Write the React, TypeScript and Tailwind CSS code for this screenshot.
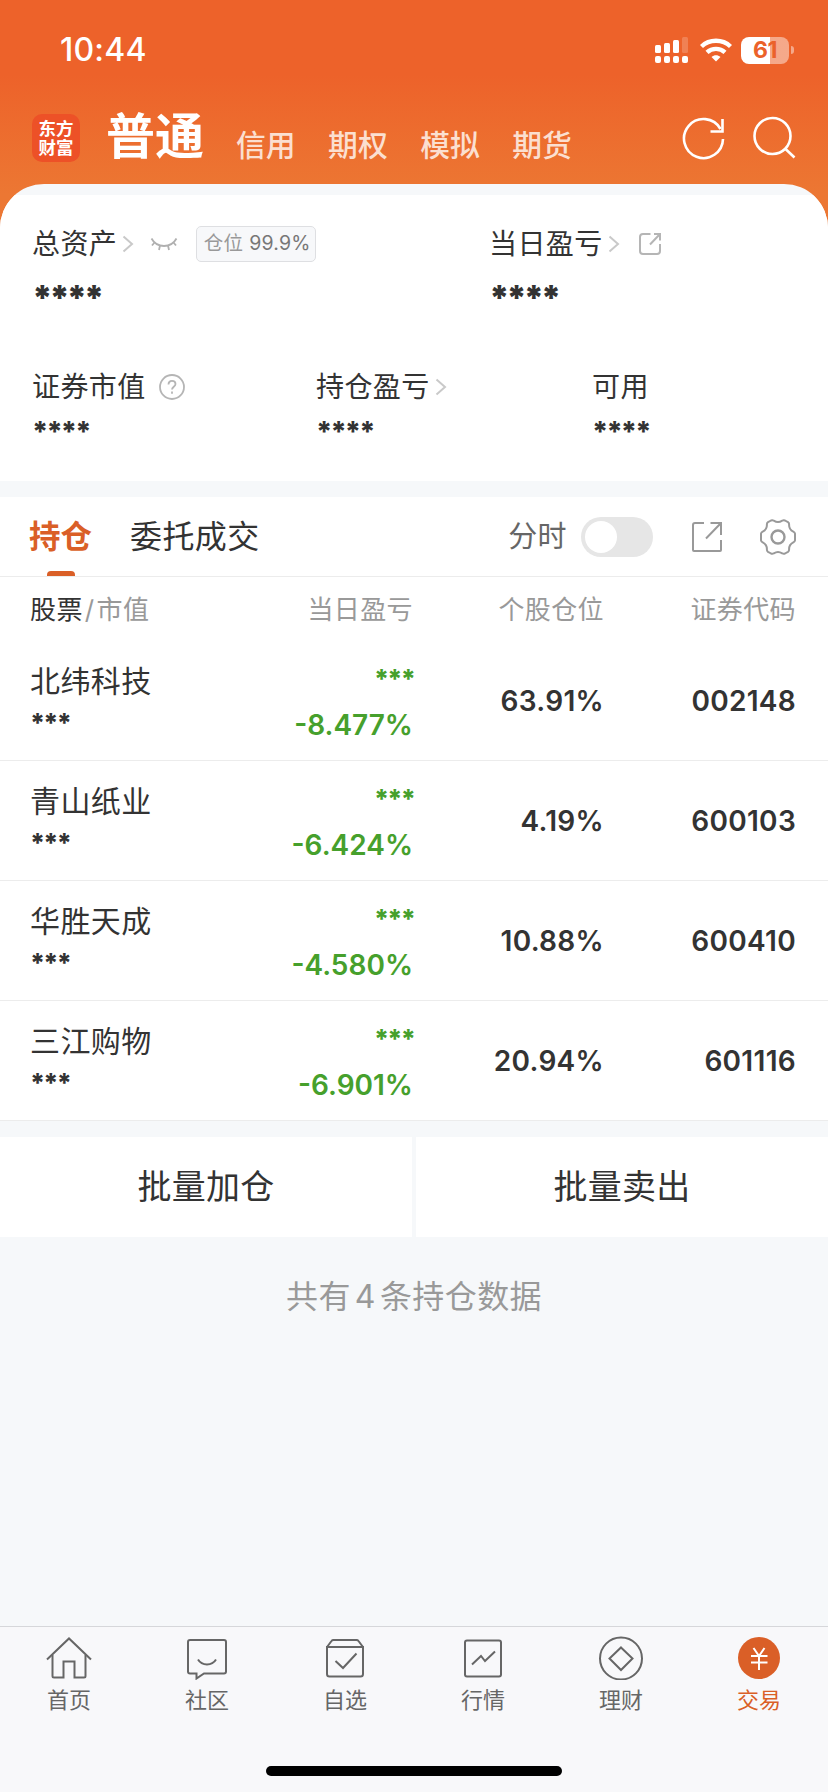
import type { ReactNode } from "react";
import clsx from "clsx";

interface Holding {
  name: string;
  change: string;
  position: string;
  code: string;
}

interface NavItem {
  label: string;
  icon: ReactNode;
  active?: boolean;
}

const MARKETS: string[] = ["信用", "期权", "模拟", "期货"];

const HOLDINGS: Holding[] = [
  { name: "北纬科技", change: "-8.477%", position: "63.91%", code: "002148" },
  { name: "青山纸业", change: "-6.424%", position: "4.19%", code: "600103" },
  { name: "华胜天成", change: "-4.580%", position: "10.88%", code: "600410" },
  { name: "三江购物", change: "-6.901%", position: "20.94%", code: "601116" },
];

const NAV_ITEMS: NavItem[] = [
  {
    label: "首页",
    icon: (
      <>
        <path d="M1 23.5 23 2.5l22 21" />
        <path d="M6.5 19v21q0 1.5 1.5 1.5h9.500V25.500h11v16H38q1.500 0 1.500-1.500V19" />
      </>
    ),
  },
  {
    label: "社区",
    icon: (
      <>
        <path d="M12.500 37.500H6q-2 0-2-2V6q0-2 2-2h34q2 0 2 2v29.500q0 2-2 2H20L12.500 42.500z" />
        <path d="M14 23.500c4 6.500 14 6.500 18 0" />
      </>
    ),
  },
  {
    label: "自选",
    icon: (
      <>
        <path d="M5 11h36v27q0 2.500-2.500 2.500h-31Q5 40.500 5 38z" />
        <path d="M5 11 9.500 5q.7-1 2-1h23q1.300 0 2 1L41 11" />
        <path d="m13.500 25 7.500 7 13.500-14.500" />
      </>
    ),
  },
  {
    label: "行情",
    icon: (
      <>
        <rect x="5" y="4.500" width="36" height="36" rx="2" />
        <path d="m12 28.500 9-8.500 4 5 10-9.500" />
      </>
    ),
  },
  {
    label: "理财",
    icon: (
      <>
        <circle cx="23" cy="22.500" r="21" />
        <path d="M23 11.500 34.500 22.500 23 34 11.500 22.500z" />
      </>
    ),
  },
  {
    label: "交易",
    active: true,
    icon: (
      <>
        <circle cx="23" cy="22" r="21" fill="#da5f27" stroke="none" />
        <path
          d="m17.500 12 5.500 8 5.500-8M23 20v14M15 20h16.500M15 26.500h16.500"
          stroke="#fff"
        />
      </>
    ),
  },
];

const StatusBar = () => (
  <div className="flex h-[100px] items-center justify-between pr-[34px] pl-[60px] text-white">
    <span className="text-[32px] leading-none font-medium tracking-[0.2px]">
      10:44
    </span>
    <div className="flex items-center">
      <svg width="34" height="28" viewBox="0 0 34 28" fill="#fff">
        <rect x="0" y="9" width="6" height="8" rx="1.500" />
        <rect x="9" y="7" width="6" height="10" rx="1.500" />
        <rect x="18" y="4" width="6" height="13" rx="1.500" />
        <rect x="27" y="1" width="6" height="16" rx="1.500" opacity="0.2" />
        <rect x="0" y="20" width="6" height="7" rx="2" />
        <rect x="9" y="20" width="6" height="7" rx="2" />
        <rect x="18" y="20" width="6" height="7" rx="2" />
        <rect x="27" y="20" width="6" height="7" rx="2" />
      </svg>
      <svg
        className="ml-[10px]"
        width="34"
        height="26"
        viewBox="0 0 34 26"
        fill="none"
        stroke="#fff"
        strokeWidth="4.400"
      >
        <path d="M2.500 9.500c8-7.600 21-7.600 29 0" />
        <path d="M8 15.300c5-4.600 13-4.600 18 0" />
        <path d="M17 24.500l-4.500-4.600c2.700-2.300 6.300-2.300 9 0z" fill="#fff" stroke="none" />
      </svg>
      <div className="ml-[8px] flex h-[27px] w-12 items-center justify-center overflow-hidden rounded-lg bg-linear-to-r from-white from-60% to-white/45 to-60%">
        <span className="text-[23px] leading-none font-bold tracking-[-0.5px] text-[#eb622a]">
          61
        </span>
      </div>
      <div className="ml-[2px] h-2 w-[3px] rounded-r-full bg-white/45" />
    </div>
  </div>
);

const Header = () => (
  <div className="flex h-[84px] pr-[32px] pl-8">
    <div className="mt-[14px] flex size-12 flex-col items-center justify-center rounded-[10px] bg-[#ed5127] text-[17.500px] leading-[19px] font-bold text-white">
      <span>东方</span>
      <span>财富</span>
    </div>
    <h1 className="mt-[5px] ml-[26px] text-[49px] leading-[64px] font-bold text-white">
      普通
    </h1>
    <nav className="mt-[25px] ml-[32px] flex gap-[32.500px] text-[29.800px] leading-[40px] font-medium text-[#fbdfd0]">
      {MARKETS.map((market) => (
        <span key={market}>{market}</span>
      ))}
    </nav>
    <div className="mt-[16px] ml-auto flex gap-[26px]">
      <svg width="44" height="44" viewBox="0 0 44 44" fill="none" stroke="#fff" strokeWidth="2.600">
        <path d="M41 23A19.500 19.500 0 1 1 38.500 13" />
        <path d="M40.500 3v12.500H28.500" />
      </svg>
      <svg width="44" height="44" viewBox="0 0 44 44" fill="none" stroke="#fff" strokeWidth="2.600">
        <circle cx="20.500" cy="20" r="18" />
        <path d="m33 32.500 9.500 9" />
      </svg>
    </div>
  </div>
);

const Chevron = () => (
  <svg
    className="ml-[5px]"
    width="12"
    height="18"
    viewBox="0 0 12 18"
    fill="none"
    stroke="#c9c9c9"
    strokeWidth="2"
  >
    <path d="m1.500 1.500 8.500 7.500-8.500 7.500" />
  </svg>
);

const Summary = () => (
  <section className="h-[286px] bg-white px-8 text-[28px] tracking-[0.4px]">
    <div className="grid grid-cols-[457px_1fr] pt-[29px]">
      <div>
        <div className="flex h-10 items-center">
          <span>总资产</span>
          <Chevron />
          <svg
            className="ml-[16px]"
            width="28"
            height="16"
            viewBox="0 0 28 16"
            fill="none"
            stroke="#b0b0b0"
            strokeWidth="1.800"
          >
            <path d="M1.500 2.500c5.500 10 19.500 10 25 0" />
            <path d="M4.500 6.500 2 9.500M10 9.500 9 14M18 9.500l1 4.500M23.500 6.500 26 9.500" />
          </svg>
          <div className="ml-[18px] flex h-9 w-[120px] items-center justify-center gap-[6px] rounded-[5px] border border-[#dedfe2] bg-[#f7f8fa] pl-[2px] text-[19.500px] tracking-[0.2px] text-[#999]">
            <span>仓位</span>
            <span className="text-[#777]">99.9%</span>
          </div>
        </div>
        <p className="mt-[9px] text-[34px] leading-[50px] font-black tracking-[-3.400px]">****</p>
      </div>
      <div>
        <div className="flex h-10 items-center">
          <span>当日盈亏</span>
          <Chevron />
          <svg
            className="ml-[18px]"
            width="24"
            height="24"
            viewBox="0 0 24 24"
            fill="none"
            stroke="#b5b5b5"
            strokeWidth="2"
          >
            <path d="M12.500 2H5Q2 2 2 5v14q0 3 3 3h14q3 0 3-3v-7" />
            <path d="M16 2h6v6.500M22 2 12 12.500" />
          </svg>
        </div>
        <p className="mt-[9px] text-[34px] leading-[50px] font-black tracking-[-3.400px]">****</p>
      </div>
    </div>
    <div className="mt-[44px] grid grid-cols-[284px_276px_1fr]">
      <div>
        <div className="flex h-10 items-center">
          <span>证券市值</span>
          <svg className="ml-[13px]" width="26" height="26" viewBox="0 0 26 26" fill="none" stroke="#b5b5b5" strokeWidth="1.800">
            <circle cx="13" cy="13" r="12" />
            <path d="M9.500 10.500c0-5 7-4.500 7-.500 0 2.500-3.500 3-3.500 5.500M13 17.500v2.200" />
          </svg>
        </div>
        <p className="mt-[5px] text-[28px] leading-[40px] font-extrabold tracking-[-1.900px]">****</p>
      </div>
      <div>
        <div className="flex h-10 items-center">
          <span>持仓盈亏</span>
          <Chevron />
        </div>
        <p className="mt-[5px] text-[28px] leading-[40px] font-extrabold tracking-[-1.900px]">****</p>
      </div>
      <div>
        <div className="flex h-10 items-center">可用</div>
        <p className="mt-[5px] text-[28px] leading-[40px] font-extrabold tracking-[-1.900px]">****</p>
      </div>
    </div>
  </section>
);

const Toolbar = () => (
  <div className="flex h-20 items-center border-b border-[#ececec] bg-white pr-[31px] pl-[29px]">
    <div className="relative flex h-full items-center text-[31.500px] font-bold text-[#da5f27]">
      持仓
      <span className="absolute bottom-0 left-[18px] h-[5px] w-7 rounded-t-sm bg-[#da5f27]" />
    </div>
    <span className="ml-[38px] text-[32px] tracking-[0.4px]">委托成交</span>
    <span className="ml-auto text-[29px] tracking-[0.4px] text-[#666]">分时</span>
    <button className="ml-[14px] flex h-10 w-[72px] items-center rounded-full bg-[#e6e6e6] px-1">
      <span className="size-8 rounded-full bg-white" />
    </button>
    <svg
      className="ml-[38px]"
      width="32"
      height="32"
      viewBox="0 0 32 32"
      fill="none"
      stroke="#999"
      strokeWidth="2"
    >
      <path d="M13 2H4Q2 2 2 4v25q0 1 1 1h26q1 0 1-1V19" />
      <path d="M19.500 2H30v12M30 2 15 17.500" />
    </svg>
    <svg
      className="ml-[36px]"
      width="38"
      height="38"
      viewBox="0 0 38 38"
      fill="none"
      stroke="#999"
      strokeWidth="2"
    >
      <circle cx="19" cy="19" r="6.500" strokeWidth="2.400" />
      <path
        strokeLinejoin="round"
        d="M12 2.500q1.500-.8 2.800.2 4.200 2.700 8.400 0 1.300-1 2.800-.2l3 1.700q1.200.8 1.100 2.200-.3 5 4.200 7.300 1.500.8 1.700 2v6.600q-.2 1.200-1.700 2-4.500 2.300-4.200 7.300.1 1.400-1.100 2.200l-3 1.700q-1.500.8-2.800-.2-4.200-2.700-8.400 0-1.300 1-2.800.2l-3-1.700q-1.200-.8-1.100-2.200.3-5-4.200-7.300-1.500-.8-1.700-2v-6.600q.2-1.200 1.700-2 4.500-2.300 4.200-7.300-.1-1.400 1.100-2.200z"
      />
    </svg>
  </div>
);

const HoldingsTable = () => (
  <section className="bg-white">
    <div className="grid h-[64px] grid-cols-[1fr_191px_191px_192px] items-center pr-8 pl-[30px] text-right text-[26px] tracking-[0.4px] text-[#999]">
      <div className="text-left">
        <span className="text-[#333]">股票</span>
        <span className="px-[2px]">/</span>市值
      </div>
      <span>当日盈亏</span>
      <span>个股仓位</span>
      <span>证券代码</span>
    </div>
    {HOLDINGS.map((holding) => (
      <div
        key={holding.code}
        className="grid h-[120px] grid-cols-[1fr_191px_191px_192px] items-center border-b border-[#ececec] pr-8 pl-[30px] text-right text-[28px] font-semibold tracking-[0.300px]"
      >
        <div className="text-left">
          <p className="text-[30px] leading-[40px] font-normal tracking-[0.4px]">
            {holding.name}
          </p>
          <p className="mt-[3px] text-[26px] leading-[37px] font-extrabold tracking-[-1.800px]">***</p>
        </div>
        <div className="text-[#46a02c]">
          <p className="mt-[4px] mr-[-1px] text-[26px] leading-[39px] font-extrabold tracking-[-1.800px]">***</p>
          <p className="mt-[5px] leading-[44px] tracking-normal">{holding.change}</p>
        </div>
        <span>{holding.position}</span>
        <span>{holding.code}</span>
      </div>
    ))}
  </section>
);

const BottomNav = () => (
  <footer className="mt-auto h-[166px] border-t border-[#d6d7da] bg-[#f8f8fa]">
    <div className="grid grid-cols-6 pt-[9px]">
      {NAV_ITEMS.map((item) => (
        <div
          key={item.label}
          className={clsx(
            "flex flex-col items-center",
            item.active ? "text-[#da5f27]" : "text-[#666]",
          )}
        >
          <svg
            width="46"
            height="44"
            viewBox="0 0 46 44"
            fill="none"
            stroke="currentColor"
            strokeWidth="2"
          >
            {item.icon}
          </svg>
          <span className="mt-[5px] text-[22px] leading-[30px]">{item.label}</span>
        </div>
      ))}
    </div>
    <div className="mx-auto mt-[51px] h-[10px] w-[296px] rounded-full bg-black" />
  </footer>
);

const App = () => {
  return (
    <div className="flex h-[1792px] w-[828px] flex-col overflow-hidden bg-[#f6f8fa] font-['Inter','Noto_Sans_CJK_SC',sans-serif] text-[#333]">
      <div className="bg-linear-to-b from-[#ed622a] from-[75px] to-[#ec7733] to-[195px]">
        <StatusBar />
        <Header />
        <div className="overflow-hidden rounded-t-[44px] bg-[#f6f8fa] pt-[11px]">
          <Summary />
        </div>
      </div>
      <main className="mt-4">
        <Toolbar />
        <HoldingsTable />
        <div className="mt-4 grid h-[100px] grid-cols-2 gap-1 text-center text-[34px] leading-[100px] tracking-[0.2px]">
          <button className="bg-white">批量加仓</button>
          <button className="bg-white">批量卖出</button>
        </div>
        <p className="mt-[36px] text-center text-[32px] leading-[48px] tracking-[0.4px] text-[#999]">
          共有<span className="px-[4px]">4</span>条持仓数据
        </p>
      </main>
      <BottomNav />
    </div>
  );
};

export default App;
